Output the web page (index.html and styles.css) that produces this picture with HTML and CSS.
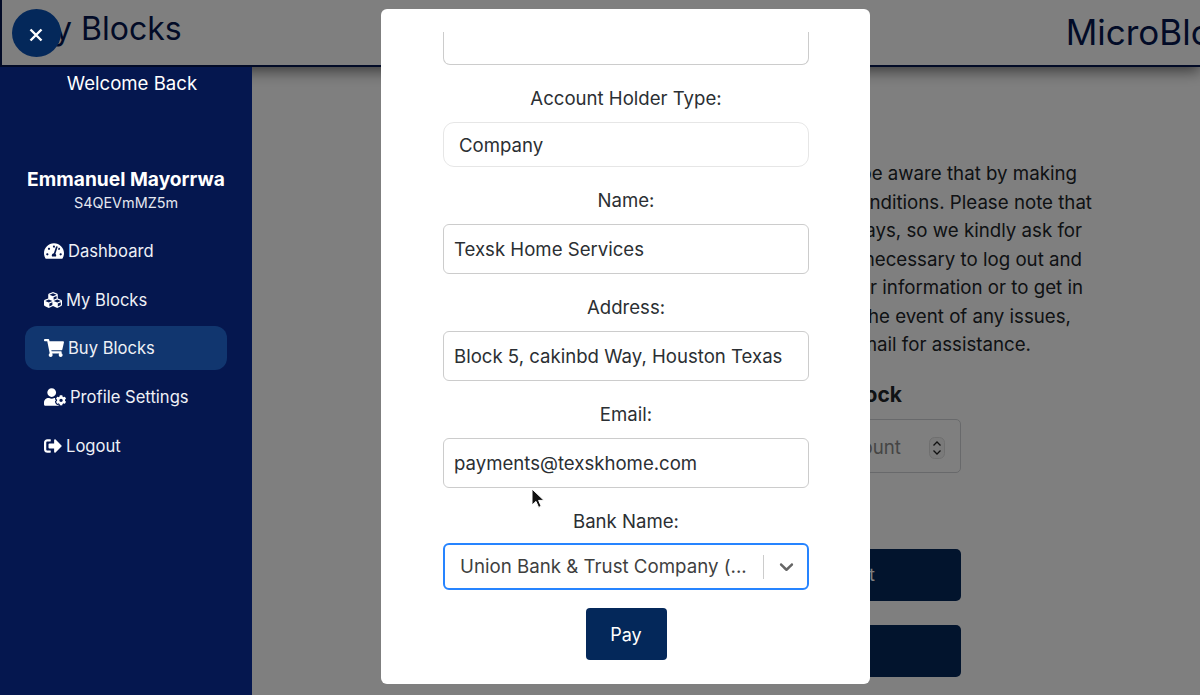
FILE: index.html
```html
<!DOCTYPE html>
<html lang="en">
<head>
<meta charset="utf-8">
<title>Buy Blocks</title>
<link rel="stylesheet" href="styles.css">
</head>
<body>
<div class="app">
  <header class="topbar">
    <div class="brand">My Blocks</div>
    <div class="divider"></div>
    <div class="title">MicroBlocks</div>
  </header>
  <div class="body-row">
    <aside class="sidebar">
      <div class="welcome">Welcome Back</div>
      <div class="profile">
        <div class="name">Emmanuel Mayorrwa</div>
        <div class="uid">S4QEVmMZ5m</div>
      </div>
      <nav class="nav">
        <a class="nav-item"><svg class="ico ico-w" viewBox="0 0 576 512"><path d="M288 32C128.94 32 0 160.94 0 320c0 52.8 14.25 102.26 39.06 144.8 5.61 9.62 16.3 15.2 27.44 15.2h443c11.14 0 21.83-5.58 27.44-15.2C561.75 422.26 576 372.8 576 320c0-159.06-128.94-288-288-288zm0 64c14.71 0 26.58 10.13 30.32 23.65-1.11 2.26-2.64 4.23-3.45 6.67l-9.22 27.67c-5.13 3.49-10.97 6.01-17.64 6.01-17.67 0-32-14.33-32-32S270.33 96 288 96zM96 384c-17.67 0-32-14.33-32-32s14.33-32 32-32 32 14.33 32 32-14.33 32-32 32zm48-160c-17.67 0-32-14.33-32-32s14.33-32 32-32 32 14.33 32 32-14.33 32-32 32zm246.77-72.41l-61.33 184C343.13 347.33 352 364.54 352 384c0 11.72-3.38 22.55-8.88 32H232.88c-5.5-9.45-8.88-20.28-8.88-32 0-33.94 26.5-61.43 59.9-63.59l61.34-184.01c4.17-12.56 17.73-19.45 30.36-15.17 12.57 4.19 19.35 17.77 15.17 30.36zm14.66 57.2l15.52-46.55c3.47-1.29 7.13-2.23 11.05-2.23 17.67 0 32 14.33 32 32s-14.33 32-32 32c-11.38-.01-20.89-6.28-26.57-15.22zM480 384c-17.67 0-32-14.33-32-32s14.33-32 32-32 32 14.33 32 32-14.33 32-32 32z"/></svg>Dashboard</a>
        <a class="nav-item"><svg class="ico" viewBox="0 0 512 512"><path d="M488.6 250.2L392 214V105.5c0-15-9.3-28.4-23.4-33.7l-100-37.5c-8.1-3.1-17.1-3.1-25.3 0l-100 37.5c-14.1 5.3-23.4 18.7-23.4 33.7V214l-96.6 36.2C9.3 255.5 0 268.9 0 283.9V394c0 13.6 7.7 26.1 19.9 32.2l100 50c10.1 5.1 22.1 5.1 32.2 0l103.9-52 103.9 52c10.1 5.1 22.1 5.1 32.2 0l100-50c12.2-6.1 19.9-18.6 19.9-32.2V283.9c0-15-9.3-28.4-23.4-33.7zM358 214.8l-85 31.9v-68.2l85-37v73.3zM154 104.1l102-38.2 102 38.2v.6l-102 41.4-102-41.4v-.6zm84 291.1l-85 42.5v-79.1l85-38.8v75.4zm0-112l-102 41.4-102-41.4v-.6l102-38.2 102 38.2v.6zm240 112l-85 42.5v-79.1l85-38.8v75.4zm0-112l-102 41.4-102-41.4v-.6l102-38.2 102 38.2v.6z"/></svg>My Blocks</a>
        <a class="nav-item active"><svg class="ico ico-w" viewBox="0 0 576 512"><path d="M528.12 301.319l47.273-208C578.806 78.301 567.391 64 551.99 64H159.208l-9.166-44.81C147.758 8.021 137.93 0 126.529 0H24C10.745 0 0 10.745 0 24v16c0 13.255 10.745 24 24 24h69.883l70.248 343.435C147.325 417.1 136 435.222 136 456c0 30.928 25.072 56 56 56s56-25.072 56-56c0-15.674-6.447-29.835-16.824-40h209.647C430.447 426.165 424 440.326 424 456c0 30.928 25.072 56 56 56s56-25.072 56-56c0-22.172-12.888-41.332-31.579-50.405l5.517-24.276c3.413-15.018-8.002-29.319-23.403-29.319H218.117l-6.545-32h293.145c11.206 0 20.92-7.754 23.403-18.681z"/></svg>Buy Blocks</a>
        <a class="nav-item"><svg class="ico ico-xw" viewBox="0 0 640 512"><path d="M610.5 373.3c2.6-14.1 2.6-28.5 0-42.6l25.8-14.9c3-1.7 4.3-5.2 3.3-8.5-6.7-21.6-18.2-41.2-33.2-57.4-2.3-2.5-6-3.1-9-1.4l-25.8 14.9c-10.9-9.3-23.4-16.5-36.9-21.3v-29.8c0-3.4-2.4-6.4-5.7-7.1-22.3-5-45-4.8-66.2 0-3.3.7-5.7 3.7-5.7 7.1v29.8c-13.5 4.8-26 12-36.9 21.3l-25.8-14.9c-2.9-1.7-6.7-1.1-9 1.4-15 16.2-26.5 35.8-33.2 57.4-1 3.3.4 6.8 3.3 8.5l25.8 14.9c-2.6 14.1-2.6 28.5 0 42.6l-25.8 14.9c-3 1.7-4.3 5.2-3.3 8.5 6.7 21.6 18.2 41.1 33.2 57.4 2.3 2.5 6 3.1 9 1.4l25.8-14.9c10.9 9.3 23.4 16.5 36.9 21.3v29.8c0 3.4 2.4 6.4 5.7 7.1 22.3 5 45 4.8 66.2 0 3.3-.7 5.7-3.7 5.7-7.1v-29.8c13.5-4.8 26-12 36.9-21.3l25.8 14.9c2.9 1.7 6.7 1.1 9-1.4 15-16.2 26.5-35.8 33.2-57.4 1-3.3-.4-6.8-3.3-8.5l-25.8-14.9zM496 400.5c-26.8 0-48.5-21.8-48.5-48.5s21.8-48.5 48.5-48.5 48.5 21.8 48.5 48.5-21.7 48.5-48.5 48.5zM224 256c70.7 0 128-57.3 128-128S294.7 0 224 0 96 57.3 96 128s57.3 128 128 128zm201.2 226.5c-2.3-1.2-4.6-2.6-6.8-3.9l-7.9 4.6c-6 3.4-12.8 5.3-19.6 5.3-10.9 0-21.4-4.6-28.9-12.6-18.3-19.8-32.3-43.9-40.2-69.6-5.5-17.7 1.9-36.4 17.9-45.7l7.9-4.6c-.1-2.6-.1-5.2 0-7.8l-7.9-4.6c-16-9.2-23.4-28-17.9-45.7.9-2.9 2.2-5.8 3.2-8.7-3.8-.3-7.5-1.2-11.4-1.2h-16.7c-22.2 10.2-46.9 16-72.9 16s-50.6-5.8-72.9-16h-16.7C60.2 288 0 348.2 0 422.4V464c0 26.5 21.5 48 48 48h352c10.1 0 19.5-3.2 27.2-8.5-1.2-3.8-2-7.7-2-11.8v-9.2z"/></svg>Profile Settings</a>
        <a class="nav-item"><svg class="ico" viewBox="0 0 512 512"><path d="M497 273L329 441c-15 15-41 4.5-41-17v-96H152c-13.3 0-24-10.7-24-24v-96c0-13.3 10.7-24 24-24h136V88c0-21.4 25.9-32 41-17l168 168c9.3 9.4 9.3 24.6 0 34zM192 436v-40c0-6.6-5.4-12-12-12H96c-17.7 0-32-14.3-32-32V160c0-17.7 14.3-32 32-32h84c6.6 0 12-5.4 12-12V76c0-6.6-5.4-12-12-12H96c-53 0-96 43-96 96v192c0 53 43 96 96 96h84c6.6 0 12-5.4 12-12z"/></svg>Logout</a>
      </nav>
    </aside>
    <main class="main">
      <div class="notice">
        <div class="line l1">be aware that by making</div>
        <div class="line l2">conditions. Please note that</div>
        <div class="line l3">days, so we kindly ask for</div>
        <div class="line l4">necessary to log out and</div>
        <div class="line l5">your information or to get in</div>
        <div class="line l6">the event of any issues,</div>
        <div class="line l7">email for assistance.</div>
      </div>
      <h2 class="buy-title">Buy Block</h2>
      <div class="amount">
        <span class="placeholder">Amount</span>
        <svg class="spinner" viewBox="0 0 16 22"><rect x="0.5" y="0.5" width="15" height="21" rx="5" fill="#f4f4f4" stroke="#d8d8d8" stroke-width="0.8"/><path d="M4.5 8.5 8 5l3.5 3.5M4.5 13.5 8 17l3.5-3.5" fill="none" stroke="#222" stroke-width="1.3"/></svg>
      </div>
      <div class="act act-one">Request</div>
      <div class="act act-two"></div>
    </main>
  </div>
  <div class="overlay"></div>
  <section class="modal">
    <div class="stub"></div>
    <div class="field">
      <label class="lbl">Account Holder Type:</label>
      <div class="input soft">Company</div>
    </div>
    <div class="field">
      <label class="lbl">Name:</label>
      <div class="input">Texsk Home Services</div>
    </div>
    <div class="field">
      <label class="lbl">Address:</label>
      <div class="input">Block 5, cakinbd Way, Houston Texas</div>
    </div>
    <div class="field">
      <label class="lbl">Email:</label>
      <div class="input">payments@texskhome.com</div>
    </div>
    <div class="field field-select">
      <label class="lbl">Bank Name:</label>
      <div class="select">
        <span class="select-value">Union Bank &amp; Trust Company (...</span>
        <span class="select-sep"></span>
        <svg class="chev" viewBox="0 0 20 20"><path d="M4.516 7.548c0.436-0.446 1.043-0.481 1.576 0l3.908 3.747 3.908-3.747c0.533-0.481 1.141-0.446 1.574 0 0.436 0.445 0.408 1.197 0 1.615-0.406 0.418-4.695 4.502-4.695 4.502-0.217 0.223-0.502 0.335-0.787 0.335s-0.57-0.112-0.789-0.335c0 0-4.287-4.084-4.695-4.502s-0.436-1.17 0-1.615z"/></svg>
      </div>
    </div>
    <button class="pay">Pay</button>
  </section>
  <button class="close" aria-label="Close"><svg viewBox="0 0 14 14"><path d="M1.5 1.5l11 11M12.5 1.5l-11 11"/></svg></button>
  <svg class="cursor" viewBox="0 0 14 22"><path d="M1 1v16l4-3.6 2.6 6 2.6-1.1-2.6-5.9H13z" fill="#111" stroke="#fff" stroke-width="1"/></svg>
</div>
</body>
</html>
```

FILE: styles.css
```css
* { box-sizing: border-box; }
html, body { margin: 0; height: 100%; }
body { font-family: Inter, "Liberation Sans", sans-serif; color: #212529; background: #fff; overflow: hidden; }
.app { position: relative; width: 1200px; height: 695px; overflow: hidden; display: flex; flex-direction: column; }

.topbar { position: relative; z-index: 1; flex: none; height: 67px; display: flex; align-items: flex-start; background: #fff; border-left: 2px solid #05174f; border-bottom: 2px solid #05174f; box-shadow: 0 4px 14px rgba(0,0,0,.55); white-space: nowrap; overflow: visible; }
.brand { width: 205px; padding: 9px 0 0 23px; font-size: 32px; line-height: 40px; color: #05174f; }
.divider { width: 1px; height: 47px; margin-top: 9px; background: #05174f; }
.title { margin-left: 884px; padding-top: 11px; font-size: 35px; line-height: 42px; color: #05174f; }

.body-row { flex: 1; display: flex; min-height: 0; }
.sidebar { position: relative; z-index: 3; flex: none; width: 252px; background: #05174f; color: #fff; }
.welcome { width: 264px; margin-top: 5px; text-align: center; font-size: 18.6px; line-height: 23px; }
.profile { margin-top: 72px; text-align: center; }
.name { font-size: 19.2px; font-weight: 700; line-height: 24px; }
.uid { margin-top: 2px; font-size: 14.4px; line-height: 20px; color: #e4e7f0; }
.nav { margin: 16px 25px 0; display: flex; flex-direction: column; gap: 5px; }
.nav-item { display: flex; align-items: center; gap: 4px; width: 202px; height: 43.7px; padding-left: 19px; border-radius: 12px; font-size: 16.6px; color: #eef0f6; }
.nav-item.active { background: #11366f; }
.ico { flex: none; width: 18px; height: 18px; fill: #fff; }
.ico-w { width: 20px; }
.ico-xw { width: 22px; }

.main { flex: 1; min-width: 0; display: flex; flex-direction: column; align-items: flex-end; background: #fff; padding-top: 93px; }
.notice { width: 100%; font-size: 18.7px; line-height: 28.5px; }
.line { text-align: right; white-space: nowrap; }
.l1 { padding-right: 123px; }
.l2 { padding-right: 108px; }
.l3 { padding-right: 118px; }
.l4 { padding-right: 118px; }
.l5 { padding-right: 117px; }
.l6 { padding-right: 129px; }
.l7 { padding-right: 169px; }
.buy-title { margin: 21px 298px 0 0; font-size: 21px; line-height: 28px; font-weight: 700; }
.amount { display: flex; align-items: center; justify-content: flex-end; width: 400px; height: 54px; margin: 10px 239px 0 0; padding: 4px 15px 0 0; border: 1px solid #d0d3d6; border-radius: 5px; }
.placeholder { margin-right: 28px; font-size: 18.7px; color: #8a8a8a; }
.spinner { width: 16px; height: 22px; }
.act { width: 440px; height: 52px; background: #04285a; border-radius: 5px; color: #fff; font-size: 18px; display: flex; align-items: center; justify-content: flex-end; padding-right: 86px; margin-right: 239px; }
.act-one { margin-top: 76px; }
.act-two { margin-top: 24px; }

.overlay { position: absolute; inset: 0; z-index: 2; background: rgba(0,0,0,.5); }

.modal { position: absolute; z-index: 4; left: 381px; top: 9px; width: 489px; height: 675px; background: #fff; border-radius: 6px; padding: 23px 61px 0 62px; display: flex; flex-direction: column; align-items: stretch; overflow: hidden; }
.stub { flex: none; height: 33px; border: 1px solid #ccc; border-top: 0; border-radius: 0 0 7px 7px; }
.field { margin-top: 21px; display: flex; flex-direction: column; }
.lbl { height: 24px; margin-bottom: 12px; text-align: center; font-size: 18.6px; line-height: 24px; color: #2b2f33; }
.input { height: 50px; padding: 0 10px; display: flex; align-items: center; border: 1px solid #ccc; border-radius: 6px; font-size: 18.6px; color: #2b2f33; white-space: nowrap; }
.input.soft { height: 45px; padding-left: 15px; border-color: #e6e6e6; border-radius: 11px; }
.field-select .lbl { margin-bottom: 10px; }
.select { height: 47px; display: flex; align-items: center; padding: 0 9px 0 15px; border: 2px solid #2684ff; border-radius: 6px; }
.select-value { flex: 1; font-size: 18.7px; color: #3f3f3f; white-space: nowrap; overflow: hidden; }
.select-sep { width: 1px; height: 24px; margin: 0 11px 0 0; background: #ccc; }
.chev { width: 23px; height: 23px; fill: #666; }
.pay { align-self: center; width: 81px; height: 52px; margin-top: 18px; background: #04285a; border: 0; border-radius: 4px; color: #fff; font: 400 18px Inter, "Liberation Sans", sans-serif; }

.close { position: absolute; z-index: 5; left: 12px; top: 9px; width: 49px; height: 48px; padding: 4px 2px 0 0; border: 0; border-radius: 50%; background: #04285a; display: flex; align-items: center; justify-content: center; }
.close svg { width: 14px; height: 14px; fill: none; stroke: #fff; stroke-width: 2.4; }
.cursor { position: absolute; z-index: 6; left: 531px; top: 488px; width: 14px; height: 22px; }
```
